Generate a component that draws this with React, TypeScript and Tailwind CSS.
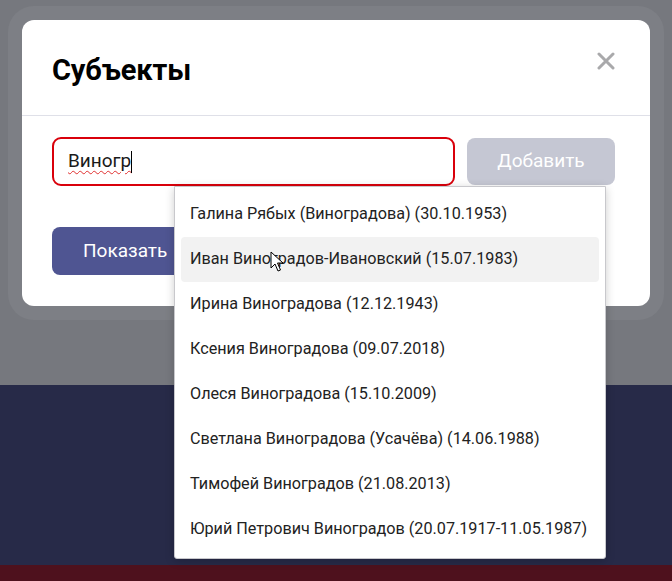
import React from "react";

const items = [
  "Галина Рябых (Виноградова) (30.10.1953)",
  "Иван Виноградов-Ивановский (15.07.1983)",
  "Ирина Виноградова (12.12.1943)",
  "Ксения Виноградова (09.07.2018)",
  "Олеся Виноградова (15.10.2009)",
  "Светлана Виноградова (Усачёва) (14.06.1988)",
  "Тимофей Виноградов (21.08.2013)",
  "Юрий Петрович Виноградов (20.07.1917-11.05.1987)",
];

function Cursor() {
  return (
    <svg className="absolute left-[89px] top-[14px]" width="14" height="22" viewBox="0 0 14 22">
      <path d="M1 1 L1 17 L5 13 L8 20 L10.5 19 L7.5 12 L13 12 Z" fill="white" stroke="black" strokeWidth="1" strokeLinejoin="round" />
    </svg>
  );
}

export default function App() {
  return (
    <div className="relative w-[672px] h-[581px] overflow-hidden font-['Roboto',sans-serif]">
      <div className="h-[385px] bg-[#76787e] pt-[20px] px-[22px]">
        <div className="bg-white rounded-[12px] shadow-[0_0_0_14px_#7d7f85] h-[286px]">
          <div className="h-[96px] border-b border-[#dfe0e8] flex items-center justify-between pl-[30px] pr-[35px]">
            <h1 className="text-[29px] font-bold text-black tracking-[-0.1px] pt-[6px]">Субъекты</h1>
            <svg width="18" height="18" viewBox="0 0 18 18" className="-mt-[14px]">
              <path d="M2 2 L16 16 M16 2 L2 16" stroke="#a9a9ab" strokeWidth="3" strokeLinecap="round" />
            </svg>
          </div>
          <div className="pl-[30px] pr-[35px] pt-[21px]">
            <div className="flex gap-[12px]">
              <div className="w-[403px] h-[49px] rounded-[9px] border-2 border-[#d9000b] flex items-center pl-[14px] text-[19px] text-[#1a1a1a]">
                <span className="underline decoration-wavy decoration-[#e03030] decoration-1 underline-offset-[3px]">Виногр</span>
                <span className="w-px h-[22px] bg-black" />
              </div>
              <div className="w-[148px] h-[47px] mt-[1px] rounded-[8px] bg-[#c5c7d3] flex items-center justify-center text-[19px] text-white">Добавить</div>
            </div>
            <div className="mt-[41px] w-[140px] h-[48px] rounded-[8px] bg-[#4f5592] flex items-center pl-[31px] text-[19px] text-white">Показать</div>
          </div>
        </div>
      </div>
      <div className="h-[180px] bg-[#272a48]" />
      <div className="h-[16px] bg-[#4e111d]" />

      <div className="absolute left-[174px] top-[186px] w-[432px] h-[373px] bg-white border border-[#c8c8cc] rounded-b-[3px] shadow-[0_2px_10px_rgba(0,0,0,0.2)] px-[6px] pt-[5px]">
        {items.map((t, i) => (
          <div
            key={t}
            className={`relative h-[45px] flex items-center pl-[9px] text-[16.2px] text-[#222] rounded-[4px] ${i === 1 ? "bg-[#f2f2f2]" : ""}`}
          >
            {t}
            {i === 1 && <Cursor />}
          </div>
        ))}
      </div>
    </div>
  );
}
